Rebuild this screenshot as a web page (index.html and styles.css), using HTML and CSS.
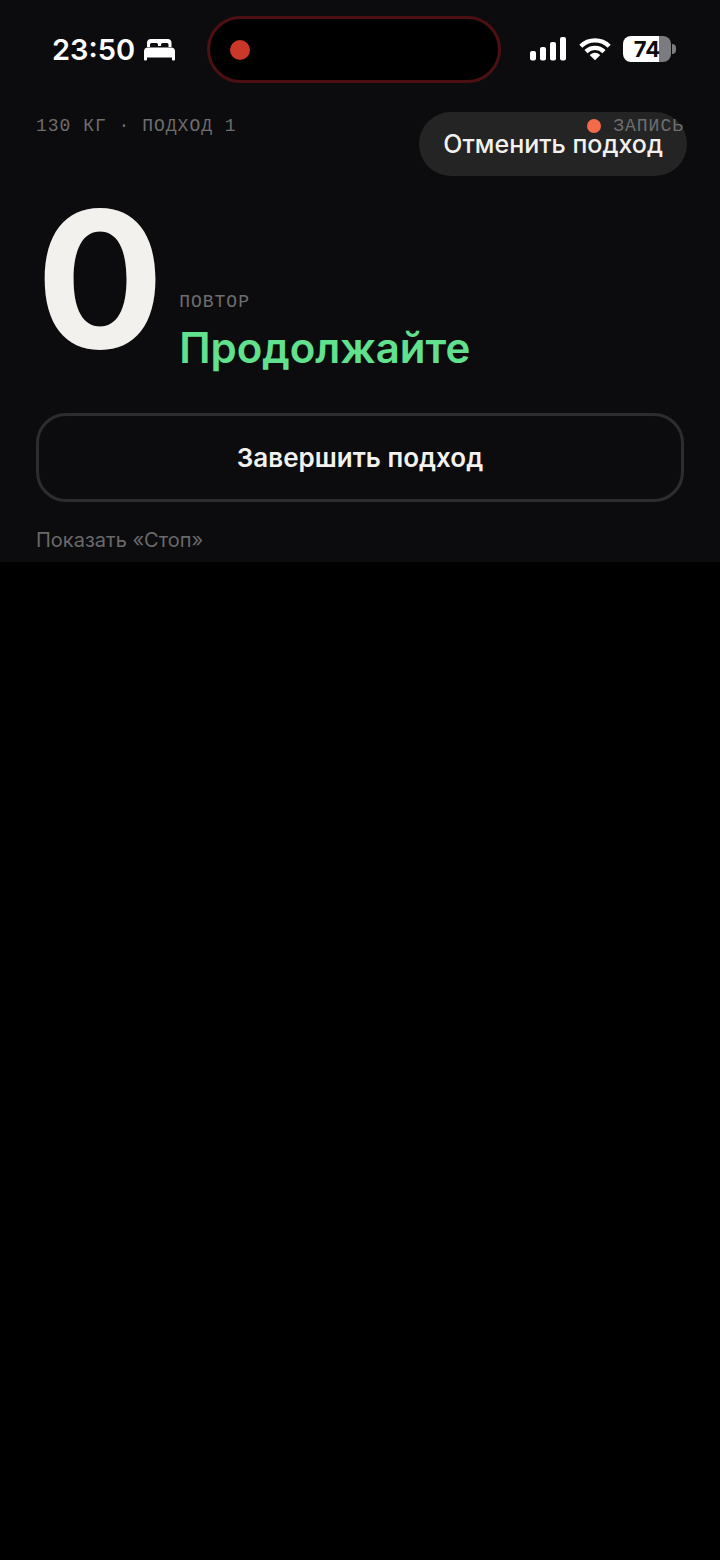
FILE: index.html
```html
<!DOCTYPE html>
<html lang="ru">
<head>
    <meta charset="UTF-8">
    <meta name="viewport" content="width=device-width, initial-scale=1.0">
    <title>Подход 1</title>
    <link rel="stylesheet" href="styles.css">
</head>
<body>

    <div class="screen">
        <!-- Status bar -->
        <div class="status-bar">
            <div class="status-left">
                <span class="clock">23:50</span>
                <svg width="31" height="22" viewBox="0 0 31 22" fill="#fff" aria-hidden="true">
                    <path d="M3 8V4Q3 0 7 0H23.500Q27.500 0 27.500 4V8H24.500V5.500Q24.500 4 23 4H18.500Q17 4 17 5.500V7H14V5.500Q14 4 12.500 4H7.500Q6 4 6 5.500V8Z"/>
                    <path d="M4 8.500H27Q31 8.500 31 12.500V20.500Q31 21.500 30 21.500H29Q28 21.500 28 20.500V18.500H3V20.500Q3 21.500 2 21.500H1Q0 21.500 0 20.500V12.500Q0 8.500 4 8.500Z"/>
                </svg>
            </div>

            <div class="island">
                <span class="island-dot"></span>
            </div>

            <div class="status-right">
                <svg width="37" height="24" viewBox="0 0 37 24" fill="#fff" aria-hidden="true">
                    <rect x="0" y="14" width="6" height="9.500" rx="2"/>
                    <rect x="10" y="10" width="6" height="13.500" rx="2"/>
                    <rect x="20" y="5" width="6" height="18.500" rx="2"/>
                    <rect x="30" y="0" width="6" height="23.500" rx="2"/>
                </svg>
                <svg width="32" height="24" viewBox="0 0 32 24" fill="none" stroke="#fff" stroke-width="4.400" aria-hidden="true">
                    <path d="M1.800 9.200A20.300 20.300 0 0 1 30.200 9.200"/>
                    <path d="M7 14.600A12.800 12.800 0 0 1 25 14.600"/>
                    <path d="M16 23.300L10.700 18Q16 13.500 21.300 18Z" fill="#fff" stroke="none"/>
                </svg>
                <div class="battery">
                    <div class="battery-body"><span>74</span></div>
                    <div class="battery-cap"></div>
                </div>
            </div>
        </div>

        <!-- Current set -->
        <main>
            <div class="set-header">
                <span class="label">130 КГ · ПОДХОД 1</span>
                <button class="cancel-btn" type="button">Отменить подход</button>
                <span class="label recording"><i class="rec-dot"></i>ЗАПИСЬ</span>
            </div>

            <div class="counter">
                <div class="reps">0</div>
                <div class="counter-text">
                    <span class="label">ПОВТОР</span>
                    <h1>Продолжайте</h1>
                </div>
            </div>

            <button class="finish-btn" type="button">Завершить подход</button>
            <button class="stop-link" type="button">Показать «Стоп»</button>
        </main>
    </div>

</body>
</html>
```

FILE: styles.css
```css
* {
    box-sizing: border-box;
}

body {
    margin: 0;
    background: #000000;
    color: #f2f1ee;
    font-family: Inter, "Liberation Sans", sans-serif;
}

button {
    font-family: inherit;
    color: inherit;
    cursor: pointer;
}

.screen {
    background: #0c0c0e;
}

/* Status bar */
.status-bar {
    display: grid;
    grid-template-columns: 1fr 294px 1fr;
    align-items: center;
    padding: 16px 44px 0 32px;
    color: #ffffff;
}

.status-left {
    display: flex;
    align-items: center;
    gap: 9px;
    padding-left: 20px;
}

.clock {
    font-size: 29px;
    line-height: 36px;
    font-weight: 600;
}

.island {
    display: flex;
    align-items: center;
    height: 67px;
    padding-left: 20px;
    border: 3px solid #4c1012;
    border-radius: 34px;
    background: #000000;
}

.island-dot {
    width: 20px;
    height: 20px;
    border-radius: 50%;
    background: #cb382a;
}

.status-right {
    display: flex;
    align-items: center;
    justify-content: flex-end;
    gap: 12px;
    padding-bottom: 2px;
}

.battery {
    display: flex;
    align-items: center;
    gap: 1px;
}

.battery-body {
    width: 48px;
    height: 26px;
    border-radius: 8px;
    background: linear-gradient(90deg, #ffffff 74%, #7c7c80 74%);
    color: #0c0c0e;
    font-size: 22px;
    line-height: 26px;
    font-weight: 700;
    text-align: center;
}

.battery-cap {
    width: 4px;
    height: 10px;
    border-radius: 0 4px 4px 0;
    background: #7c7c80;
}

/* Set info */
main {
    padding: 29px 36px 8px;
}

.set-header {
    position: relative;
    display: flex;
    justify-content: space-between;
    align-items: flex-start;
}

.label {
    font-family: "Liberation Mono", monospace;
    font-size: 18px;
    line-height: 28px;
    letter-spacing: 1px;
    color: #6e6e6f;
}

/* The button sits under the recording mark */
.cancel-btn {
    height: 64px;
    margin-right: -3px;
    padding: 0 24px;
    border: none;
    border-radius: 32px;
    background: #242425;
    font-size: 25px;
    font-weight: 500;
}

.recording {
    position: absolute;
    top: 0;
    right: 0;
    display: flex;
    align-items: center;
    gap: 12px;
    pointer-events: none;
}

.rec-dot {
    width: 14px;
    height: 14px;
    border-radius: 50%;
    background: #f56a4a;
}

/* Rep counter */
.counter {
    display: flex;
    align-items: flex-end;
    gap: 15px;
    margin-top: 24px;
}

.reps {
    margin-bottom: 18px;
    font-size: 190px;
    line-height: 158px;
    font-weight: 700;
}

.counter-text {
    display: flex;
    flex-direction: column;
    gap: 4px;
}

h1 {
    margin: 0;
    font-size: 42px;
    line-height: 56px;
    font-weight: 600;
    color: #61e08d;
}

.finish-btn {
    display: block;
    width: 100%;
    height: 89px;
    margin-top: 37px;
    border: 3px solid #2d2d2e;
    border-radius: 30px;
    background: transparent;
    font-size: 26px;
    font-weight: 600;
}

.stop-link {
    display: block;
    margin-top: 24px;
    padding: 0;
    border: none;
    background: none;
    color: #69696a;
    font-size: 20px;
    line-height: 28px;
}
```
